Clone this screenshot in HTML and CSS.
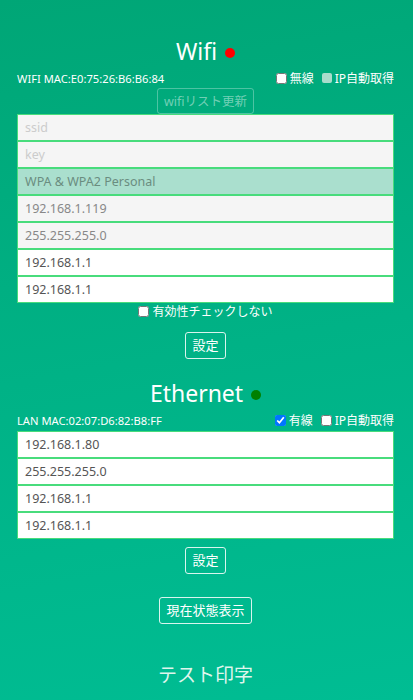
FILE: index.html
```html
<!DOCTYPE html>
<html lang="ja">
<head>
<meta charset="utf-8">
<link rel="stylesheet" href="styles.css">
</head>
<body>
<div class="page">
  <section class="sec wifi">
    <h2 class="title">Wifi <span class="dot red"></span></h2>
    <div class="macrow">
      <span class="mac">WIFI MAC:E0:75:26:B6:B6:84</span>
      <span class="opts">
        <label class="opt"><input type="checkbox" class="cb">無線</label>
        <label class="opt"><span class="cb-dis"></span>IP自動取得</label>
      </span>
    </div>
    <div class="center"><button class="btn disabled">wifiリスト更新</button></div>
    <div class="fields">
      <div class="field gray ph">ssid</div>
      <div class="field gray ph">key</div>
      <div class="field sel">WPA &amp; WPA2 Personal</div>
      <div class="field gray">192.168.1.119</div>
      <div class="field gray">255.255.255.0</div>
      <div class="field">192.168.1.1</div>
      <div class="field">192.168.1.1</div>
    </div>
    <div class="center chk"><label class="opt"><input type="checkbox" class="cb">有効性チェックしない</label></div>
    <div class="center set1"><button class="btn">設定</button></div>
  </section>
  <section class="sec eth">
    <h2 class="title">Ethernet <span class="dot green"></span></h2>
    <div class="macrow">
      <span class="mac">LAN MAC:02:07:D6:82:B8:FF</span>
      <span class="opts">
        <label class="opt"><input type="checkbox" class="cb" checked>有線</label>
        <label class="opt"><input type="checkbox" class="cb">IP自動取得</label>
      </span>
    </div>
    <div class="fields ethfields">
      <div class="field">192.168.1.80</div>
      <div class="field">255.255.255.0</div>
      <div class="field">192.168.1.1</div>
      <div class="field">192.168.1.1</div>
    </div>
    <div class="center set2"><button class="btn">設定</button></div>
    <div class="center stat"><button class="btn">現在状態表示</button></div>
    <h3 class="test">テスト印字</h3>
  </section>
</div>
</body>
</html>
```

FILE: styles.css
```css
html, body {
  margin: 0;
  padding: 0;
}
body {
  width: 413px;
  height: 700px;
  overflow: hidden;
  background: linear-gradient(170deg, #00a676 0%, #00b286 50%, #00bd93 100%);
  font-family: "Noto Sans", "Noto Sans CJK JP", sans-serif;
  color: #fff;
}
.page {
  padding: 0 19px 0 17px;
}
.title {
  margin: 0;
  height: 36px;
  line-height: 36px;
  font-size: 23px;
  font-weight: 400;
  text-align: center;
  color: #fff;
}
.wifi .title {
  margin-top: 33px;
}
.eth .title {
  margin-top: 16px;
}
.dot {
  display: inline-block;
  width: 10px;
  height: 10px;
  border-radius: 50%;
  vertical-align: middle;
  margin-left: 2px;
  position: relative;
  top: -1px;
}
.red { background: #ff0000; }
.green { background: #008000; }
.macrow {
  display: flex;
  justify-content: space-between;
  align-items: center;
  height: 18px;
  font-size: 11.2px;
}
.opts {
  display: flex;
  gap: 8px;
}
.opt {
  display: flex;
  align-items: center;
  gap: 3px;
  font-size: 12px;
}
.cb {
  margin: 0;
  width: 11px;
  height: 11px;
}
.cb-dis {
  display: inline-block;
  width: 10px;
  height: 10px;
  border-radius: 2px;
  background: #a9dccb;
}
.center {
  display: flex;
  justify-content: center;
}
.btn {
  background: transparent;
  border: 1px solid rgba(255,255,255,0.85);
  border-radius: 3px;
  color: #fff;
  font-family: "Noto Sans", "Noto Sans CJK JP", sans-serif;
  font-size: 13px;
  height: 27px;
  padding: 0 6px;
  line-height: 25px;
}
.btn.disabled {
  border-color: rgba(255,255,255,0.3);
  color: rgba(255,255,255,0.45);
  height: 26px;
  margin-top: 1px;
  font-size: 12.5px;
}
.fields {
  display: flex;
  flex-direction: column;
}
.field {
  box-sizing: border-box;
  height: 27px;
  border: 1px solid #48dc7c;
  background: #fff;
  color: #555;
  font-size: 12.5px;
  line-height: 25px;
  padding-left: 7px;
}
.field.gray {
  background: #f5f5f5;
  color: #888;
}
.field.gray.ph {
  color: #ccc;
}
.field.sel {
  background: #aadfce;
  color: #6a8d80;
}
.chk {
  height: 16px;
}
.set1 {
  margin-top: 13px;
}
.ethfields {
  margin-top: 2px;
}
.set2 {
  margin-top: 8px;
}
.stat {
  margin-top: 23px;
}
.test {
  margin: 36px 0 0;
  text-align: center;
  font-size: 19px;
  font-weight: 400;
  color: #dff5ec;
}
```
